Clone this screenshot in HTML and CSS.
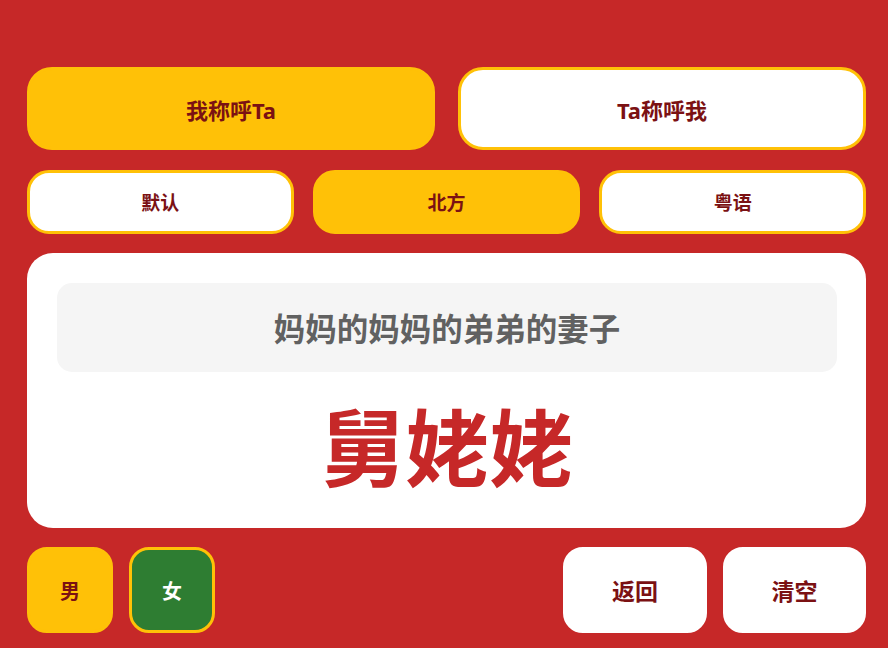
FILE: index.html
```html
<!DOCTYPE html>
<html lang="zh-CN">
<head>
<meta charset="utf-8">
<title>亲戚称呼计算器</title>
<link rel="stylesheet" href="styles.css">
</head>
<body>
<div class="app">
  <div class="row mode">
    <button class="btn big active">我称呼Ta</button>
    <button class="btn big">Ta称呼我</button>
  </div>
  <div class="row dialect">
    <button class="btn mid">默认</button>
    <button class="btn mid active">北方</button>
    <button class="btn mid">粤语</button>
  </div>
  <div class="card">
    <div class="chain">妈妈的妈妈的弟弟的妻子</div>
    <div class="result">舅姥姥</div>
  </div>
  <div class="row bottom">
    <button class="btn sq male">男</button>
    <button class="btn sq female">女</button>
    <div class="spacer"></div>
    <button class="btn act">返回</button>
    <button class="btn act">清空</button>
  </div>
</div>
</body>
</html>
```
FILE: styles.css
```css
* { box-sizing: border-box; }
html, body { margin: 0; height: 100%; }
body {
  background: #c62828;
  font-family: "Noto Sans", "Noto Sans CJK SC", sans-serif;
  font-weight: 700;
}
.app {
  padding: 67px 22px 15px 27px;
  display: flex;
  flex-direction: column;
}
.row { display: grid; }
.btn {
  font-family: "Noto Sans", "Noto Sans CJK SC", sans-serif;
  font-weight: 700;
  color: #7b1113;
  background: #fff;
  border: 3px solid #ffc107;
  padding: 0;
  margin: 0;
  cursor: pointer;
}
.btn.active { background: #ffc107; }
.mode {
  grid-template-columns: 1fr 1fr;
  gap: 23px;
}
.big {
  height: 83px;
  border-radius: 25px;
  font-size: 22px;
}
.dialect {
  margin-top: 20px;
  grid-template-columns: 1fr 1fr 1fr;
  gap: 19.5px;
}
.mid {
  height: 64px;
  border-radius: 22px;
  font-size: 19px;
}
.card {
  margin-top: 19px;
  height: 275px;
  background: #fff;
  border-radius: 26px;
  padding: 30px 29px 0 30px;
  display: flex;
  flex-direction: column;
}
.chain {
  height: 89px;
  background: #f5f5f5;
  border-radius: 15px;
  display: flex;
  align-items: center;
  justify-content: center;
  font-size: 31.5px;
  color: #616161;
  padding-bottom: 2px;
}
.result {
  flex: 1;
  display: flex;
  align-items: center;
  justify-content: center;
  font-size: 84px;
  color: #c62828;
  padding-bottom: 12px;
}
.bottom {
  margin-top: 19px;
  grid-template-columns: 86px 86px 1fr 144px 143px;
  column-gap: 16px;
}
.bottom .spacer { margin: 0 -16px; }
.sq {
  height: 86px;
  border-radius: 20px;
  font-size: 20px;
}
.male { background: #ffc107; border-color: #ffc107; }
.female { background: #2e7d32; color: #fff; }
.act {
  height: 86px;
  border-radius: 20px;
  border-color: #fff;
  font-size: 23px;
}
```
